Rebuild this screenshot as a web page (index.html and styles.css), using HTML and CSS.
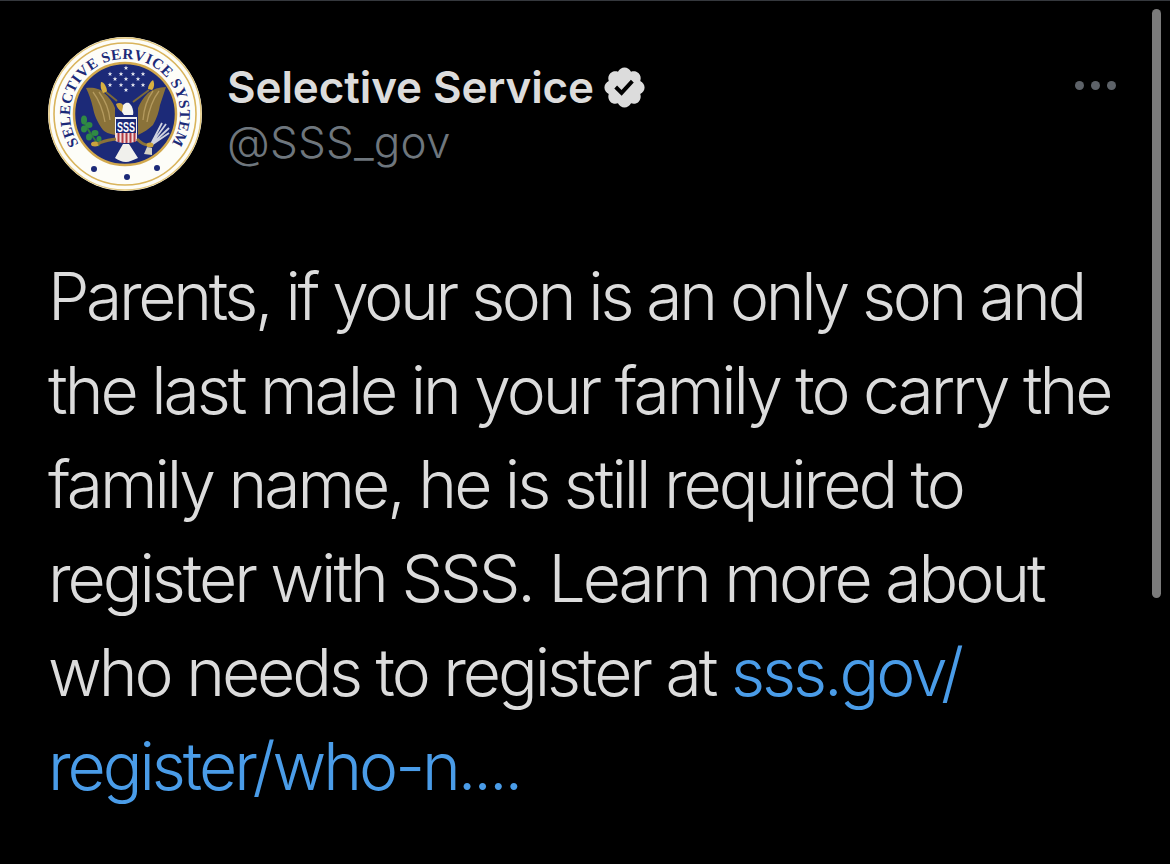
FILE: index.html
```html
<!DOCTYPE html>
<html lang="en">
<head>
  <meta charset="UTF-8" />
  <title>Selective Service tweet</title>
  <link rel="stylesheet" href="styles.css">
</head>
<body>
  <div class="top-line"></div>
  <div class="scroll-thumb"></div>

  <div class="tweet">
    <!-- Profile Header -->
    <div class="tweet-header">
      <svg class="avatar" viewBox="-78 -78 156 156" role="img" aria-label="Selective Service System seal">
        <defs>
          <path id="seal-arc" d="M-47.300 28A55 55 0 1 1 47.300 28" />
          <polygon id="star" points="0,-2.4 .6,-.8 2.3,-.8 1,.3 1.4,2 0,1 -1.4,2 -1,.3 -2.3,-.8 -.6,-.8" />
        </defs>
        <circle r="77" fill="#fdfdf8" />
        <circle r="71" fill="none" stroke="#d9b45c" stroke-width="1.6" />
        <text class="seal-text"><textPath href="#seal-arc" startOffset="50%" text-anchor="middle">SELECTIVE SERVICE SYSTEM</textPath></text>
        <circle r="51" fill="#1c2a78" stroke="#d2a94e" stroke-width="2.5" />
        <!-- stars -->
        <g fill="#e6e8f0">
          <use href="#star" x="1" y="-46" /><use href="#star" x="-15" y="-40" /><use href="#star" x="-4" y="-40" />
          <use href="#star" x="8" y="-40" /><use href="#star" x="18" y="-40" /><use href="#star" x="-10" y="-35" />
          <use href="#star" x="1" y="-35" /><use href="#star" x="13" y="-35" /><use href="#star" x="-15" y="-29" />
          <use href="#star" x="-4" y="-29" /><use href="#star" x="8" y="-29" /><use href="#star" x="18" y="-29" />
          <use href="#star" x="1" y="-24" />
        </g>
        <!-- wings -->
        <path d="M-39-26C-31-27-25-25-22-22-16-17-12-12-10-6L-10 21C-16 20-20 18-22 16-28 8-31 0-32-6-34-14-36-20-39-26Z" fill="#8a7239" />
        <path d="M41-27C34-27 28-25 23-21 18-16 15-11 13-6L13 21C19 18 24 15 28 11 32 4 34-3 35-9 37-15 39-21 41-27Z" fill="#8a7239" />
        <path d="M-32-22C-26-14-22-4-20 8M-26-22C-20-14-16-6-15 6M34-23C28-15 24-5 22 8M28-23C22-15 19-7 18 6" fill="none" stroke="#b49a5e" stroke-width="1.3" />
        <!-- talons up top -->
        <path d="M-24-32C-21-32-18-27-18-22L-22-21C-24-24-25-28-24-32Z" fill="#d8b040" />
        <path d="M-19-22L-8-13" stroke="#7c6a38" stroke-width="2" />
        <path d="M28-34C30-30 29-26 27-24L23-25C23-28 25-32 28-34Z" fill="#d8b040" />
        <path d="M24-24L8-12" stroke="#7c6a38" stroke-width="2" />
        <!-- head -->
        <path d="M-3-2C-4-10 1-12 4-11 7-9 9-3 8 1L-1 1Z" fill="#f4f4f0" />
        <path d="M-9-10C-6-12-2-11-2-8L-3-2C-6-4-8-6-9-10Z" fill="#c9a23e" />
        <!-- shield -->
        <rect x="-10" y="3" width="22" height="16" fill="#f2f2f6" />
        <rect x="-9" y="5" width="20" height="14" fill="#1c2a78" />
        <text class="seal-shield" x="1" y="17.5" text-anchor="middle" textLength="18" lengthAdjust="spacingAndGlyphs">SSS</text>
        <path d="M-10 19H12V26C12 28 6 29 1 29S-10 28-10 26Z" fill="#f2dcdc" />
        <path d="M-6.500 19V28M-2.500 19V29M1.500 19V29M5.500 19V29M9.500 19V28" stroke="#b03a44" stroke-width="2" />
        <!-- tail -->
        <path d="M-2 30L4 30 13 44C8 46 4 48 1 48-3 48-7 46-10 44Z" fill="#f0f0ec" />
        <!-- olive branch -->
        <path d="M-26 32C-32 22-40 14-42 4" fill="none" stroke="#2f7a3a" stroke-width="2" />
        <g fill="#2f8a44">
          <ellipse cx="-41" cy="6" rx="3" ry="4.500" /><ellipse cx="-36" cy="11" rx="3.500" ry="3" />
          <ellipse cx="-41" cy="15" rx="3" ry="3.500" /><ellipse cx="-30" cy="19" rx="3.500" ry="3" /><ellipse cx="-36" cy="23" rx="3" ry="3.500" />
          <ellipse cx="-26" cy="25" rx="2.500" ry="3" />
        </g>
        <ellipse cx="-30" cy="30" rx="4" ry="2.500" fill="#c9a23e" />
        <path d="M-27 30C-20 26-14 26-9 25" stroke="#8a7239" stroke-width="3" fill="none" />
        <!-- arrows -->
        <path d="M25 32L37 9M25 32L41 10M25 32L44 14M25 32L44 19" stroke="#cfd2e0" stroke-width="1.800" />
        <path d="M12 25C16 29 20 31 23 31" stroke="#8a7239" stroke-width="3" fill="none" />
        <ellipse cx="25" cy="31" rx="3.500" ry="2.500" fill="#c9a23e" />
        <path d="M22 33L27 34 27 41 19 40Z" fill="#d5d2c6" />
        <!-- bottom dots -->
        <g fill="#1c2a78">
          <circle cx="-31" cy="55" r="3" /><circle cx="2" cy="63" r="3" /><circle cx="32" cy="54" r="3" />
        </g>
        <circle r="76" fill="none" stroke="#e2c67c" stroke-width="1.5" />
      </svg>

      <div class="names">
        <div class="display-name">
          Selective Service
          <svg class="badge" viewBox="0 0 24 24" aria-label="Verified account">
            <path d="M22.25 12c0-1.43-.88-2.67-2.19-3.34.46-1.39.2-2.9-.81-3.91s-2.52-1.27-3.91-.81c-.66-1.31-1.91-2.19-3.34-2.19s-2.67.88-3.33 2.19c-1.4-.46-2.91-.2-3.92.81s-1.26 2.52-.8 3.91c-1.31.67-2.2 1.91-2.2 3.34s.89 2.67 2.2 3.34c-.46 1.39-.21 2.9.8 3.91s2.52 1.26 3.91.81c.67 1.31 1.91 2.19 3.34 2.19s2.68-.88 3.34-2.19c1.39.45 2.9.2 3.91-.81s1.27-2.52.81-3.91c1.31-.67 2.19-1.91 2.19-3.34zm-11.71 4.2L6.8 12.46l1.41-1.42 2.26 2.26 4.8-5.23 1.47 1.36-6.2 6.77z" />
          </svg>
        </div>
        <div class="handle">@SSS_gov</div>
      </div>

      <div class="more"><span></span><span></span><span></span></div>
    </div>

    <!-- Tweet Body -->
    <div class="tweet-text">
      <span class="tight-line">Parents, if your son is an only son and</span><br>
      the last male in your family to carry the<br>
      family name, he is still required to<br>
      register with SSS. Learn more about<br>
      who needs to register at <a href="#">sss.gov/<br>register/who-n....</a>
    </div>
  </div>
</body>
</html>
```

FILE: styles.css
```css
* {
  box-sizing: border-box;
  margin: 0;
  padding: 0;
}

html, body {
  height: 100%;
  overflow: hidden;
  background-color: #000000;
  font-family: Inter, "Liberation Sans", sans-serif;
}

.top-line {
  position: absolute;
  top: 0;
  left: 0;
  right: 0;
  height: 1px;
  background-color: #35383d;
}

.scroll-thumb {
  position: absolute;
  top: 9px;
  left: 1152px;
  width: 9px;
  height: 589px;
  border-radius: 5px;
  background-color: #7b7b7b;
}

.tweet {
  padding: 36px 54px 0 47px;
}

.tweet-header {
  display: flex;
  align-items: flex-start;
}

.avatar {
  width: 156px;
  height: 156px;
  flex-shrink: 0;
}

.seal-text {
  font-family: "Liberation Serif", serif;
  font-weight: bold;
  font-size: 15px;
  letter-spacing: 0.6px;
  fill: #1c2a78;
}

.seal-shield {
  font-family: "Liberation Sans", sans-serif;
  font-weight: bold;
  font-size: 15px;
  fill: #ffffff;
}

.names {
  flex: 1;
  margin-left: 24px;
  padding-top: 26px;
}

.display-name {
  display: flex;
  align-items: center;
  gap: 8px;
  height: 50px;
  font-size: 44px;
  font-weight: 600;
  letter-spacing: -0.1px;
  color: #dcdcdc;
}

.badge {
  width: 47px;
  height: 47px;
  margin-left: -1px;
  fill: #dcdcdc;
}

.handle {
  height: 50px;
  margin-top: 3px;
  font-size: 44px;
  font-weight: 300;
  letter-spacing: 0.2px;
  color: #6e767d;
}

.more {
  display: flex;
  gap: 7px;
  padding-top: 45px;
}

.more span {
  width: 9px;
  height: 9px;
  border-radius: 50%;
  background-color: #5d6268;
}

.tweet-text {
  margin-top: 57px;
  padding-left: 1px;
  font-size: 66px;
  font-weight: 280;
  line-height: 94px;
  letter-spacing: -3.05px;
  white-space: nowrap;
  color: #dcdcdc;
}

.tight-line {
  letter-spacing: -3.35px;
}

.tweet-text a {
  color: #4a9ce8;
  text-decoration: none;
}
```
